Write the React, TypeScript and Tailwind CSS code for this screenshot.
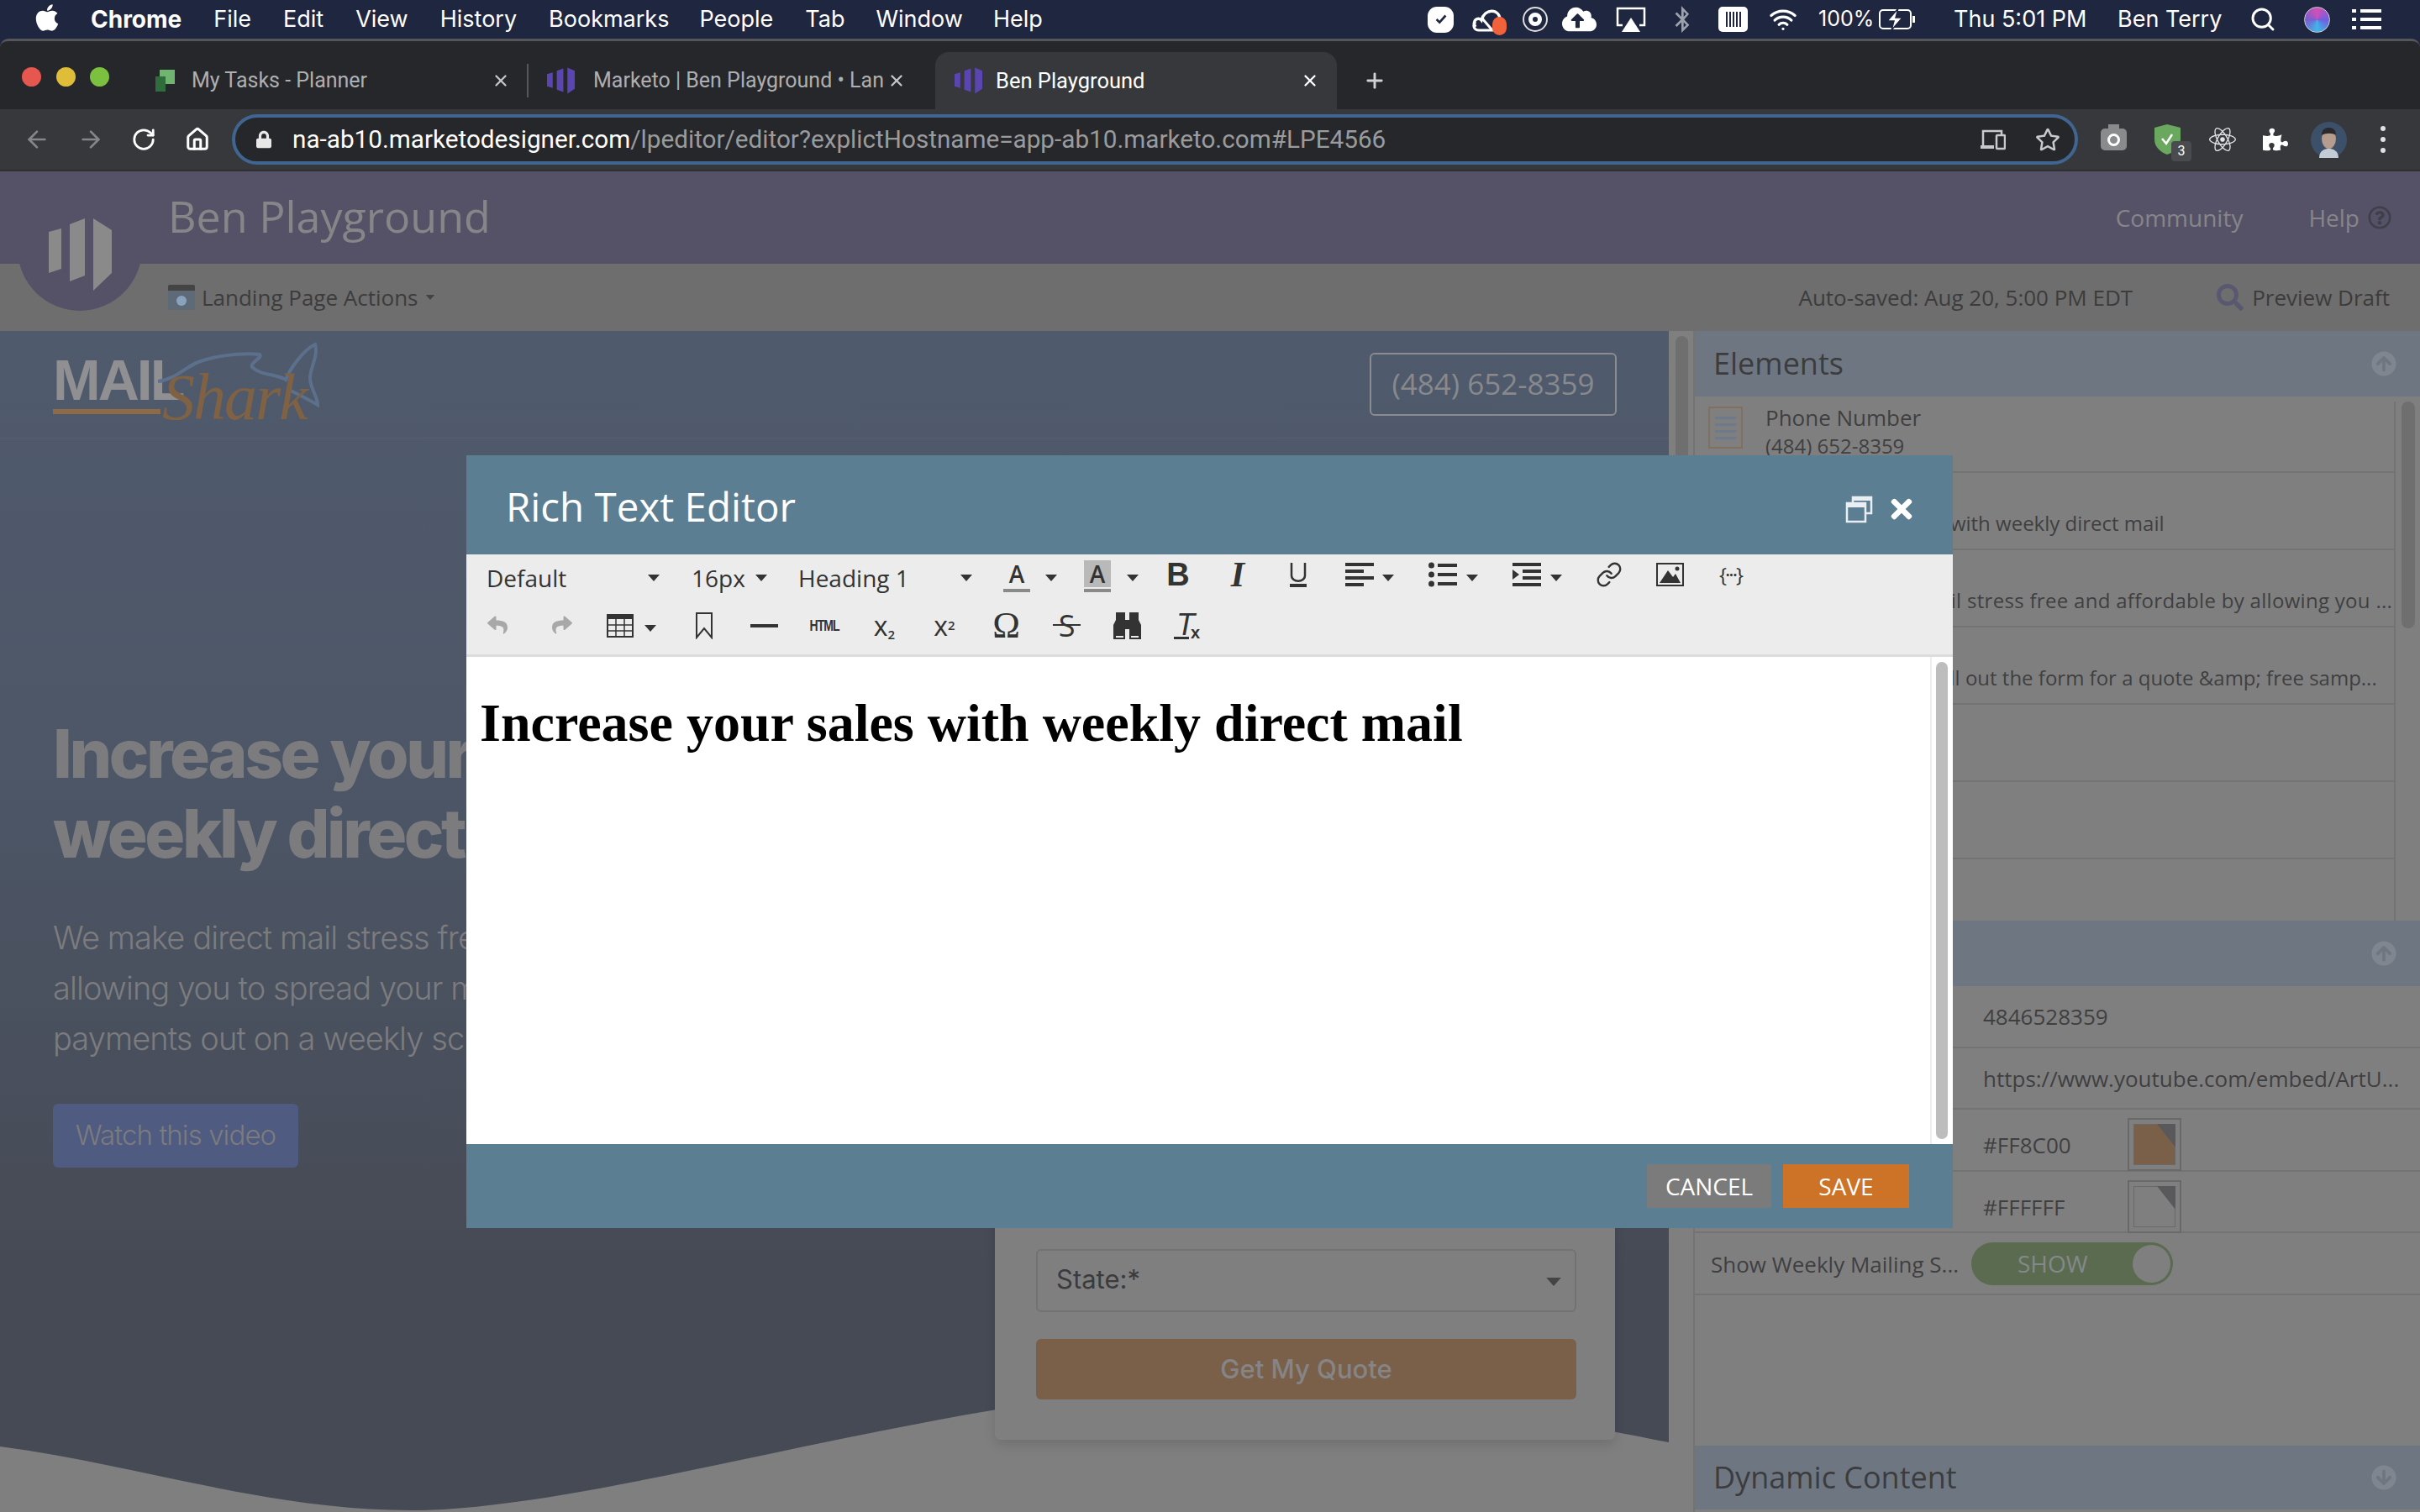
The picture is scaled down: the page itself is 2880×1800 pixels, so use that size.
import React from "react";
import {
  FaApple, FaBluetoothB, FaCloudUploadAlt, FaPuzzlePiece, FaReact, FaReply, FaShare,
  FaTimes, FaRegStar, FaArrowCircleUp, FaArrowCircleDown, FaRegQuestionCircle, FaLock, FaSearch,
} from "react-icons/fa";
import { ArrowLeft, ArrowRight, RotateCw, Home, Search, Wifi, Plus, X, Link } from "lucide-react";

const ui = "font-['Open_Sans',sans-serif]";
const sys = "font-['Inter','Liberation_Sans',sans-serif]";

function Caret({ className = "" }: { className?: string }) {
  return <span className={`shrink-0 w-0 h-0 border-l-[7px] border-r-[7px] border-t-[8px] border-l-transparent border-r-transparent border-t-[#333] ${className}`} />;
}

function Favicon({ className = "" }: { className?: string }) {
  return (
    <svg viewBox="0 0 34 32" className={className}>
      <polygon points="0,8 7,6 7,25 0,23" fill="#5b45b0" />
      <polygon points="12,4 20,1 20,30 12,27" fill="#5b45b0" />
      <polygon points="25,0 34,4 34,26 25,32" fill="#5b45b0" />
    </svg>
  );
}

function MenuBar() {
  const items: [string, string][] = [
    ["File", "ml-[38px]"], ["Edit", "ml-[38px]"], ["View", "ml-[38px]"], ["History", "ml-[38px]"], ["Bookmarks", "ml-[38px]"],
    ["People", "ml-[36px]"], ["Tab", "ml-[38px]"], ["Window", "ml-[37px]"], ["Help", "ml-[36px]"],
  ];
  return (
    <div className={`h-[46px] shrink-0 flex items-center bg-[#1f2640] text-white text-[27px] ${sys}`}>
      <FaApple className="ml-[41px] w-[30px] h-[36px] -mt-[5px]" />
      <span className="ml-[37px] font-bold text-[28px]">Chrome</span>
      {items.map(([t, m]) => <span key={t} className={m}>{t}</span>)}
      <div className="ml-auto flex items-center">
        <span className="w-[31px] h-[31px] rounded-[11px] bg-white flex items-center justify-center">
          <svg viewBox="0 0 20 20" className="w-[18px] h-[18px]"><path d="M4 10l4 4 8-9" stroke="#1f2640" strokeWidth="3" fill="none" /></svg>
        </span>
        <span className="ml-[22px] relative w-[41px] h-[31px]">
          <svg viewBox="0 0 41 31" className="w-[41px] h-[31px]"><path d="M4 24c-5-7 3-13 7-8 4-14 20-14 22-2" stroke="#fff" strokeWidth="3.5" fill="none" /><path d="M12 14l12 14H8c-6 0-8-6-4-10" stroke="#fff" strokeWidth="3" fill="none" /></svg>
          <span className="absolute right-0 bottom-[-3px] w-[17px] h-[22px] rounded-full bg-[#f0623a]" />
        </span>
        <span className="ml-[19px] w-[30px] h-[30px] rounded-full border-2 border-[#ddd] flex items-center justify-center">
          <span className="w-[16px] h-[16px] rounded-full border-[5px] border-white" />
        </span>
        <FaCloudUploadAlt className="ml-[17px] w-[41px] h-[36px]" />
        <svg viewBox="0 0 36 30" className="ml-[23px] w-[36px] h-[30px]"><path d="M8 22H2V2h32v20h-6" stroke="#fff" strokeWidth="2.5" fill="none" /><polygon points="18,13 29,30 7,30" fill="#fff" /></svg>
        <FaBluetoothB className="ml-[31px] w-[24px] h-[32px] text-[#9ea2ad]" />
        <span className="ml-[31px] w-[35px] h-[30px] rounded-[5px] bg-white flex items-center justify-center gap-[2px]">
          <i className="block w-[2px] h-[18px] bg-[#1f2640]" /><i className="block w-[2px] h-[18px] bg-[#1f2640]" /><i className="block w-[2px] h-[18px] bg-[#1f2640]" /><i className="block w-[2px] h-[18px] bg-[#1f2640]" /><i className="block w-[2px] h-[18px] bg-[#1f2640]" />
        </span>
        <Wifi className="ml-[22px] w-[40px] h-[34px]" strokeWidth={2.2} />
        <span className="ml-[22px] text-[25px] w-[63px] whitespace-nowrap">100%</span>
        <svg viewBox="0 0 44 26" className="ml-[9px] w-[44px] h-[26px]"><rect x="1" y="2" width="37" height="22" rx="4" stroke="#fff" strokeWidth="2" fill="none" /><rect x="40" y="9" width="3" height="8" fill="#fff" /><polygon points="23,0 10,15 18,15 15,26 28,11 20,11" fill="#fff" stroke="#1f2640" strokeWidth="1.5" /></svg>
        <span className="ml-[45px] w-[159px] whitespace-nowrap">Thu 5:01 PM</span>
        <span className="ml-[36px] w-[125px] whitespace-nowrap">Ben Terry</span>
        <Search className="ml-[32px] w-[32px] h-[32px]" strokeWidth={2.2} />
        <span className="ml-[33px] w-[31px] h-[31px] rounded-full bg-[conic-gradient(#d44fb5,#6f5fe0,#3fb6e8,#7a5fd0,#d44fb5)] border border-[#ccc]" />
        <svg viewBox="0 0 35 28" className="ml-[26px] mr-[46px] w-[35px] h-[28px]"><rect x="0" y="2" width="5" height="4" fill="#fff" /><rect x="10" y="2" width="25" height="4" fill="#fff" /><rect x="0" y="12" width="5" height="4" fill="#fff" /><rect x="10" y="12" width="25" height="4" fill="#fff" /><rect x="0" y="22" width="5" height="4" fill="#fff" /><rect x="10" y="22" width="25" height="4" fill="#fff" /></svg>
      </div>
    </div>
  );
}

function TabStrip() {
  return (
    <div className={`h-[84px] shrink-0 flex items-stretch bg-[#26272b] border-t-[3px] border-[#55565a] rounded-t-[10px] text-[25px] font-['Roboto',sans-serif]`}>
      <div className="w-[1113px] flex items-center pt-[13px]">
        <span className="ml-[26px] w-[23px] h-[23px] rounded-full bg-[#e6584f] -mt-[9px]" />
        <span className="ml-[18px] w-[23px] h-[23px] rounded-full bg-[#e0bd39] -mt-[9px]" />
        <span className="ml-[17px] w-[23px] h-[23px] rounded-full bg-[#7cc03f] -mt-[9px]" />
        <svg viewBox="0 0 23 26" className="ml-[55px] w-[23px] h-[26px] shrink-0"><rect x="5" width="18" height="17" fill="#6fb56f" /><rect x="0" y="8" width="12" height="18" fill="#2f6e3c" /></svg>
        <span className="ml-[20px] w-[359px] text-[#aeafb1] whitespace-nowrap">My Tasks - Planner</span>
        <X className="w-[22px] h-[22px] text-[#c5c6c8] -ml-[2px]" strokeWidth={2.5} />
        <span className="ml-[20px] w-[2px] h-[40px] bg-[#56575b]" />
        <Favicon className="ml-[22px] w-[33px] h-[32px] shrink-0" />
        <span className="ml-[22px] w-[347px] text-[#aeafb1] whitespace-nowrap overflow-hidden">Marketo | Ben Playground • Landing</span>
        <X className="ml-[3px] w-[22px] h-[22px] text-[#c5c6c8]" strokeWidth={2.5} />
      </div>
      <div className="mt-[13px] w-[478px] bg-[#37383c] rounded-t-[16px] flex items-center text-[25.5px]">
        <Favicon className="ml-[23px] w-[33px] h-[32px]" />
        <span className="ml-[16px] text-white">Ben Playground</span>
        <X className="ml-auto mr-[21px] w-[22px] h-[22px] text-white" strokeWidth={2.5} />
      </div>
      <div className="pt-[13px] flex items-center"><Plus className="ml-[31px] w-[28px] h-[28px] text-[#d0d1d3]" strokeWidth={2.5} /></div>
    </div>
  );
}

function Toolbar() {
  return (
    <div className="h-[74px] shrink-0 flex items-center bg-[#37383c] border-b-[2px] border-[#2e2f33]">
      <ArrowLeft className="ml-[28px] w-[32px] h-[32px] text-[#85868a]" strokeWidth={2} />
      <ArrowRight className="ml-[32px] w-[32px] h-[32px] text-[#85868a]" strokeWidth={2} />
      <RotateCw className="ml-[32px] w-[30px] h-[30px] text-white" strokeWidth={2.2} />
      <Home className="ml-[34px] w-[30px] h-[30px] text-white" strokeWidth={2.4} />
      <div className="ml-[26px] w-[2197px] h-[60px] flex items-center rounded-full border-[4px] border-[#3f6590] bg-[#26272b]">
        <FaLock className="ml-[25px] w-[18px] h-[22px] text-[#e8e8e8]" />
        <span className="ml-[25px] text-[29.7px] font-['Roboto',sans-serif] whitespace-nowrap text-[#9a9b9d]"><span className="text-white">na-ab10.marketodesigner.com</span>/lpeditor/editor?explictHostname=app-ab10.marketo.com#LPE4566</span>
        <svg viewBox="0 0 30 26" className="ml-auto w-[30px] h-[26px]"><path d="M3 21V3h22v5" stroke="#c8c9cb" strokeWidth="2.5" fill="none" /><rect x="0" y="20" width="16" height="4" fill="#c8c9cb" /><rect x="19" y="8" width="10" height="16" rx="1" stroke="#c8c9cb" strokeWidth="2.5" fill="none" /></svg>
        <FaRegStar className="ml-[35px] mr-[17px] w-[30px] h-[30px] text-[#c8c9cb]" />
      </div>
      <span className="ml-[27px] relative w-[31px] h-[26px] rounded-[5px] bg-[#8a8b8d] flex items-center justify-center">
        <span className="w-[15px] h-[15px] rounded-full border-[3px] border-white" />
        <span className="absolute -top-[5px] left-[9px] w-[13px] h-[6px] bg-[#8a8b8d]" />
      </span>
      <span className="ml-[33px] relative w-[31px] h-[34px] -mt-[2px]">
        <svg viewBox="0 0 31 36" className="w-[31px] h-[36px]"><path d="M15 0l16 4v14c0 9-7 15-16 18C7 33 0 27 0 18V4z" fill="#6aa85f" /><path d="M9 17l5 6 7-11" stroke="#fff" strokeWidth="2.5" fill="none" /></svg>
        <span className="absolute left-[20px] top-[20px] w-[24px] h-[24px] rounded-[4px] bg-[#4a4b4e] text-white text-[16px] flex items-center justify-center font-['Roboto',sans-serif]">3</span>
      </span>
      <FaReact className="ml-[34px] w-[32px] h-[32px] text-[#e2e3e5]" />
      <FaPuzzlePiece className="ml-[32px] w-[30px] h-[30px] text-white" />
      <svg viewBox="0 0 43 43" className="ml-[27px] w-[43px] h-[43px]">
        <circle cx="21.5" cy="21.5" r="21.5" fill="#3d5069" />
        <path d="M10 43c0-9 7-11 11.500-11S33 34 33 43z" fill="#c4cdd6" />
        <ellipse cx="21.500" cy="20" rx="8.500" ry="12" fill="#b59c8c" />
        <path d="M13 16c0-7 4-9 8.500-9S30 9 30 16c-4-3-12-3-17 0z" fill="#2a2a2e" />
      </svg>
      <span className="ml-[40px] flex flex-col gap-[7px]">
        <i className="block w-[6px] h-[6px] rounded-full bg-[#e0e1e3]" /><i className="block w-[6px] h-[6px] rounded-full bg-[#e0e1e3]" /><i className="block w-[6px] h-[6px] rounded-full bg-[#e0e1e3]" />
      </span>
    </div>
  );
}

function AppHeader() {
  return (
    <div className={`h-[110px] shrink-0 flex items-center bg-[#555268] text-[#868688] ${ui}`}>
      <span className="ml-[200px] -mt-[5px] text-[52px] leading-none">Ben Playground</span>
      <span className="ml-auto text-[28px]">Community</span>
      <span className="ml-[78px] text-[28px]">Help</span>
      <FaRegQuestionCircle className="ml-[10px] mr-[34px] w-[28px] h-[28px] text-[#3f3f4a]" />
    </div>
  );
}

function SubHeader() {
  return (
    <div className={`h-[80px] shrink-0 flex items-center bg-[#6e6e6e] text-[#3c3c3c] text-[26px] ${ui}`}>
      <span className="ml-[200px] w-[32px] h-[30px] rounded-[2px] bg-[#5f6a78] border-t-[7px] border-[#444] flex items-center justify-center">
        <span className="w-[12px] h-[12px] rounded-full bg-[#8aa3bd]" />
      </span>
      <span className="ml-[8px]">Landing Page Actions</span>
      <Caret className="ml-[7px] !border-t-[#444] scale-75" />
      <span className="ml-auto">Auto-saved: Aug 20, 5:00 PM EDT</span>
      <FaSearch className="ml-[100px] w-[32px] h-[32px] text-[#5a5870]" />
      <span className="ml-[10px] mr-[36px]">Preview Draft</span>
    </div>
  );
}

function LeftPane() {
  return (
    <div className="relative w-[1986px] shrink-0 h-full bg-[linear-gradient(180deg,#4f5a6c_0%,#4d5768_35%,#464a54_80%)]">
      <div className="h-[128px] border-b border-[#566071] flex items-start">
        <div className="relative ml-[63px] mt-[18px] w-[320px] h-[110px]">
          <span className={`absolute left-0 top-[6px] text-[#909092] font-['Liberation_Sans',sans-serif] font-bold text-[68px] leading-none tracking-[-3px]`}>MAIL</span>
          <span className="absolute left-0 top-[75px] w-[128px] h-[6px] bg-[#8f6a47]" />
          <svg viewBox="0 0 320 110" className="absolute -left-[4px] top-0 w-[320px] h-[110px] overflow-visible">
            <path d="M129 42c20-2 34-18 48-23 16-6 48-12 73-9 4 4-12 10-9 15 10 10 28 8 40 15 6-15 22-36 35-42 4 14-6 28-6 40 0 12 9 22 9 32-10-6-22-12-32-17" stroke="#5c708c" strokeWidth="4" fill="none" />
          </svg>
          <span className="absolute left-[130px] top-[22px] font-['Liberation_Serif',serif] italic text-[#7f6144] text-[78px] leading-none tracking-[-2px]">Shark</span>
        </div>
        <div className={`ml-auto mr-[62px] mt-[26px] w-[294px] h-[75px] rounded-[6px] border-2 border-[#8a8c90] flex items-center justify-center text-[#88898c] text-[35px] ${ui}`}>(484) 652-8359</div>
      </div>
      <div className="pl-[63px] pt-[327px] font-['Inter',sans-serif] text-[#7c7c7e] whitespace-nowrap">
        <div className="text-[80px] leading-[95px] font-extrabold tracking-[-3.4px]">Increase your sales with<br />weekly direct mail</div>
        <div className="mt-[47px] text-[38px] leading-[60px] font-light tracking-[-0.9px]">We make direct mail stress free and affordable by<br />allowing you to spread your mailing<br />payments out on a weekly schedule</div>
        <div className="mt-[48px] w-[292px] h-[76px] rounded-[6px] bg-[#4f5b80] flex items-center justify-center text-[33px] font-light tracking-[-0.9px]">Watch this video</div>
      </div>
      <svg viewBox="0 0 1986 178" className="absolute left-0 bottom-0 w-[1986px] h-[178px]">
        <path d="M0 100C170 123 320 176 490 176C720 176 1150 30 1450 30C1650 30 1850 68 1986 95V178H0Z" fill="#7f7f80" />
      </svg>
      <div className="absolute left-[1184px] top-[600px] w-[738px] h-[720px] rounded-[6px] bg-[#7f7f80] shadow-[0_6px_14px_rgba(0,0,0,0.12)] flex flex-col justify-end pl-[49px] pr-[46px] pb-[48px] font-['Inter',sans-serif]">
        <div className="h-[75px] rounded-[6px] border-2 border-[#727273] flex items-center justify-between pl-[22px] pr-[18px] text-[31px] text-[#3b3b3c]">
          <span className="-mt-[2px]">State:*</span><Caret className="!border-t-[#444] mt-[3px] scale-125" />
        </div>
        <div className="mt-[32px] h-[72px] rounded-[6px] bg-[#7a6049] flex items-center justify-center text-[31px] font-medium text-[#858587]">Get My Quote</div>
      </div>
    </div>
  );
}

function PanelHeader({ title, down = false, h }: { title: string; down?: boolean; h: string }) {
  const I = down ? FaArrowCircleDown : FaArrowCircleUp;
  return (
    <div className={`${h} shrink-0 bg-[#6e7781] flex items-center pl-[22px] pr-[28px] text-[36px] text-[#3c3c3e]`}>
      <span>{title}</span>
      <I className="ml-auto w-[30px] h-[30px] text-[#7f8690]" />
    </div>
  );
}

function ElementRow({ title, value, valueClass = "" }: { title: string; value: string; valueClass?: string }) {
  return (
    <div className="h-[92px] border-b-2 border-[#737374] pl-[84px] pt-[9px] text-[#3f3f40] whitespace-nowrap">
      <div className="text-[26px] leading-[34px]">{title}</div>
      <div className={`text-[24px] leading-[34px] ${valueClass}`}>{value}</div>
    </div>
  );
}

function Swatch({ fill }: { fill: string }) {
  return (
    <span className="relative w-[64px] h-[63px] border-2 border-[#69696a] p-[5px]">
      <span className={`block w-full h-full border border-[#69696a] ${fill}`} />
      <svg viewBox="0 0 22 28" className="absolute right-[5px] top-[5px] w-[22px] h-[28px]"><polygon points="0,0 22,0 22,28" fill="#59595c" /></svg>
    </span>
  );
}

function RightPane() {
  return (
    <div className={`flex-1 min-w-0 h-full flex flex-col bg-[#7f7f80] ${ui}`}>
      <PanelHeader title="Elements" h="h-[78px]" />
      <div className="relative h-[624px] shrink-0 pr-[29px] pt-[6px]">
        <div className="border-r-2 border-[#737374] h-full">
          <div className="h-[85px] flex border-b-2 border-[#737374] pl-[16px] text-[#3f3f40] leading-[34px]">
            <span className="mt-[6px] w-[41px] h-[50px] border-2 border-[#80705f] flex flex-col gap-[5px] justify-center px-[6px]">
              <i className="block h-[3px] bg-[#6c7a8c]" /><i className="block h-[3px] bg-[#6c7a8c]" /><i className="block h-[3px] bg-[#6c7a8c]" /><i className="block h-[3px] bg-[#6c7a8c]" />
            </span>
            <div className="ml-[27px] pt-[2px] whitespace-nowrap"><div className="text-[26px]">Phone Number</div><div className="text-[24px]">(484) 652-8359</div></div>
          </div>
          <ElementRow title="Headline" value="Increase your sales with weekly direct mail" />
          <ElementRow title="Subheadline" value="We make direct mail stress free and affordable by allowing you ..." valueClass="tracking-[0.3px]" />
          <ElementRow title="Form Headline" value="Ready to start? Fill out the form for a quote &amp;amp; free samp..." valueClass="ml-[29px]" />
          <div className="h-[92px] border-b-2 border-[#737374]" />
          <div className="h-[92px] border-b-2 border-[#737374]" />
        </div>
        <span className="absolute right-[6px] top-[6px] w-[16px] h-[270px] rounded-full bg-[#6f6f70]" />
      </div>
      <PanelHeader title="Variables" h="h-[78px]" />
      <div className="flex-1 text-[26px] text-[#3f3f40]">
        {["4846528359", "https://www.youtube.com/embed/ArtU..."].map((v) => (
          <div key={v} className="h-[73.5px] flex items-center border-b-2 border-[#737374] pl-[343px] pt-[2px] whitespace-nowrap">{v}</div>
        ))}
        <div className="h-[74px] flex items-center border-b-2 border-[#737374] pl-[343px] pt-[10px]"><span className="w-[172px] pt-[2px]">#FF8C00</span><Swatch fill="bg-[#7a6049]" /></div>
        <div className="h-[73px] flex items-center border-b-2 border-[#737374] pl-[343px] pt-[12px]"><span className="w-[172px] pt-[2px]">#FFFFFF</span><Swatch fill="bg-[#7f7f80]" /></div>
        <div className="h-[74px] flex items-center border-b-2 border-[#737374] pl-[19px]">
          <span className="w-[310px] whitespace-nowrap pt-[2px]">Show Weekly Mailing S...</span>
          <span className="w-[240px] h-[51px] rounded-full bg-[#5b6b4f] flex items-center relative text-[#84888a] text-[28px] pl-[55px]">SHOW<span className="absolute right-[3px] top-[3px] w-[45px] h-[45px] rounded-full bg-[#7f7f80]" /></span>
        </div>
      </div>
      <PanelHeader title="Dynamic Content" down h="h-[76px]" />
      <div className="h-[3px] shrink-0" />
    </div>
  );
}

function TB({ ml, children, className = "" }: { ml: string; children: React.ReactNode; className?: string }) {
  return <span className={`${ml} shrink-0 flex items-center justify-center text-[#333] ${className}`}>{children}</span>;
}

function Bars({ kind }: { kind: "align" | "list" | "indent" }) {
  const r = (x: number, y: number, w: number) => <rect key={`${x}${y}`} x={x} y={y} width={w} height="4" fill="#333" />;
  return (
    <svg viewBox="0 0 34 30" className="w-[34px] h-[30px]">
      {kind === "align" && [r(0, 1, 34), r(0, 9, 22), r(0, 17, 34), r(0, 25, 22)]}
      {kind === "list" && [<circle key="a" cx="3.5" cy="4" r="3.5" fill="#333" />, <circle key="b" cx="3.5" cy="15" r="3.5" fill="#333" />, <circle key="c" cx="3.5" cy="26" r="3.5" fill="#333" />, r(11, 2, 23), r(11, 13, 23), r(11, 24, 23)]}
      {kind === "indent" && [r(0, 1, 34), r(12, 9, 22), r(12, 17, 22), r(0, 25, 34), <polygon key="t" points="0,9 8,15 0,21" fill="#333" />]}
    </svg>
  );
}

function ColorA({ bg }: { bg?: boolean }) {
  return (
    <span className="w-[32px] flex flex-col items-center">
      <span className={`w-[32px] h-[32px] flex items-center justify-center text-[28px] font-semibold leading-none ${bg ? "bg-[#b9b9b9]" : ""}`}>A</span>
      <span className="mt-[2px] w-[32px] h-[4px] bg-[#8a8a8a]" />
    </span>
  );
}

function Modal() {
  return (
    <div className={`absolute left-[555px] top-[542px] w-[1769px] h-[920px] flex flex-col bg-[#5c7e92] ${ui}`}>
      <div className="h-[118px] shrink-0 flex items-center pl-[47px] text-white text-[47.5px]">
        <span className="mt-[3px]">Rich Text Editor</span>
        <svg viewBox="0 0 33 33" className="ml-auto mt-[10px] w-[33px] h-[33px]"><path d="M9 8V2h22v19h-7" stroke="#e8eef2" strokeWidth="2.5" fill="none" /><rect x="9" y="1" width="22" height="5" fill="#e8eef2" /><rect x="2" y="9" width="22" height="22" stroke="#e8eef2" strokeWidth="2.5" fill="none" /><rect x="2" y="9" width="22" height="5" fill="#e8eef2" /></svg>
        <FaTimes className="ml-[18px] mr-[45px] mt-[10px] w-[32px] h-[36px] text-white" />
      </div>
      <div className="h-[122px] shrink-0 bg-[#ececec] border-b-[3px] border-[#dcdcdc] flex flex-col">
        <div className="h-[56px] flex items-center text-[28px] text-[#333] whitespace-nowrap">
          <span className="ml-[24px] w-[192px] shrink-0">Default</span>
          <Caret />
          <span className="ml-[38px] w-[76px] shrink-0">16px</span>
          <Caret />
          <span className="ml-[37px] w-[193px] shrink-0">Heading 1</span>
          <Caret />
          <TB ml="ml-[37px]" className="-mt-[4px]"><ColorA /></TB>
          <Caret className="ml-[18px]" />
          <TB ml="ml-[32px]" className="-mt-[4px]"><ColorA bg /></TB>
          <Caret className="ml-[19px]" />
          <TB ml="ml-[35px]" className="-mt-[8px] w-[24px]"><span className="font-['Liberation_Sans',sans-serif] font-bold text-[38px] leading-none">B</span></TB>
          <TB ml="ml-[47px]" className="-mt-[8px] w-[24px]"><span className="font-['Liberation_Serif',serif] italic font-bold text-[42px] leading-none">I</span></TB>
          <TB ml="ml-[50px]" className="-mt-[8px] w-[20px]">
            <svg viewBox="0 0 20 30" className="w-[20px] h-[30px]"><path d="M2 1v15c0 9 16 9 16 0V1" stroke="#333" strokeWidth="2.5" fill="none" /><rect y="26" width="20" height="4" fill="#333" /></svg>
          </TB>
          <TB ml="ml-[46px]" className="-mt-[8px]"><Bars kind="align" /></TB>
          <Caret className="ml-[10px]" />
          <TB ml="ml-[41px]" className="-mt-[8px]"><Bars kind="list" /></TB>
          <Caret className="ml-[11px]" />
          <TB ml="ml-[41px]" className="-mt-[8px]"><Bars kind="indent" /></TB>
          <Caret className="ml-[11px]" />
          <TB ml="ml-[40px]" className="-mt-[8px]"><Link className="w-[32px] h-[32px] text-[#333]" strokeWidth={1.8} /></TB>
          <TB ml="ml-[40px]" className="-mt-[8px]">
            <svg viewBox="0 0 33 28" className="w-[33px] h-[28px]"><rect x="1" y="1" width="31" height="26" stroke="#333" strokeWidth="2" fill="none" /><polygon points="4,24 14,9 20,17 23,13 29,24" fill="#333" /><circle cx="25" cy="7" r="2.500" fill="#333" /></svg>
          </TB>
          <TB ml="ml-[40px]" className="-mt-[8px] w-[31px] text-[24px] leading-none tracking-[-2px]">{"{···}"}</TB>
        </div>
        <div className="h-[60px] flex items-center whitespace-nowrap -mt-[1px]">
          <FaReply className="ml-[24px] w-[26px] h-[24px] text-[#a8a8a8] -mt-[2px] shrink-0" />
          <FaShare className="ml-[51px] w-[26px] h-[24px] text-[#a8a8a8] -mt-[2px] shrink-0" />
          <TB ml="ml-[40px]">
            <svg viewBox="0 0 32 28" className="w-[32px] h-[28px]"><rect x="1" y="1" width="30" height="26" stroke="#333" strokeWidth="2" fill="none" /><rect x="1" y="1" width="30" height="5" fill="#333" /><path d="M11 6v21M21 6v21M1 13h30M1 20h30" stroke="#333" strokeWidth="1.5" /></svg>
          </TB>
          <Caret className="ml-[13px] mt-[6px]" />
          <svg viewBox="0 0 20 32" className="ml-[47px] w-[20px] h-[32px] shrink-0"><path d="M1 1h18v29l-9-11-9 11z" stroke="#333" strokeWidth="2" fill="none" /></svg>
          <span className="ml-[45px] w-[33px] h-[4px] bg-[#333] shrink-0" />
          <TB ml="ml-[38px]" className="w-[34px] text-[14px] font-bold font-['Liberation_Sans',sans-serif] tracking-[-1px] scale-y-125">HTML</TB>
          <TB ml="ml-[40px]" className="w-[29px] text-[32px] leading-none"><span>x<sub className="text-[15px] font-semibold">2</sub></span></TB>
          <TB ml="ml-[43px]" className="w-[28px] text-[32px] leading-none"><span>x<sup className="text-[15px] font-semibold">2</sup></span></TB>
          <TB ml="ml-[42px]" className="w-[35px] text-[44px] leading-none font-['Liberation_Serif',serif]">Ω</TB>
          <TB ml="ml-[38px]" className="w-[33px] text-[36px] leading-none relative"><span>S</span><span className="absolute left-0 top-[16px] w-[33px] h-[2px] bg-[#333]" /></TB>
          <svg viewBox="0 0 33 32" className="ml-[39px] w-[33px] h-[32px] shrink-0">
            <path d="M3 0h11v9h5V0h11v9l3 6v17H19V20h-5v12H0V15l3-6z" fill="#333" />
            <rect x="3" y="28" width="9" height="2" fill="#ececec" /><rect x="21" y="28" width="9" height="2" fill="#ececec" />
          </svg>
          <TB ml="ml-[39px]" className="w-[31px] relative h-[32px] font-['Liberation_Sans',sans-serif] italic text-[36px] leading-none">
            <span className="absolute left-[3px] -top-[3px]">T</span><span className="absolute left-0 bottom-0 w-[18px] h-[3px] bg-[#333]" /><span className="absolute right-0 -bottom-[2px] text-[20px] not-italic font-bold">x</span>
          </TB>
        </div>
      </div>
      <div className="flex-1 min-h-0 bg-white flex">
        <div className="flex-1 pl-[16px] pt-[39px] font-['Liberation_Serif',serif] font-bold text-[64px] leading-[80px] text-black whitespace-nowrap">Increase your sales with weekly direct mail</div>
        <div className="w-[27px] border-l-2 border-[#eee] pl-[5px] pr-[6px] py-[6px]"><span className="block h-full rounded-full bg-[#bdbdbd]" /></div>
      </div>
      <div className="h-[100px] shrink-0 flex items-center justify-end pr-[52px] text-white text-[28px]">
        <span className="w-[148px] h-[52px] bg-[#7b7b7b] flex items-center justify-center">CANCEL</span>
        <span className="ml-[14px] w-[150px] h-[52px] bg-[#cd7327] flex items-center justify-center">SAVE</span>
      </div>
    </div>
  );
}

export default function App() {
  return (
    <div className="relative w-[2880px] h-[1800px] overflow-hidden flex flex-col bg-[#1f2640]">
      <MenuBar />
      <TabStrip />
      <Toolbar />
      <AppHeader />
      <SubHeader />
      <div className="flex-1 min-h-0 flex bg-[#7f7f80]">
        <LeftPane />
        <div className="w-[31px] shrink-0 h-full border-r-2 border-[#737374] pl-[8px] pr-[6px] pt-[6px]">
          <span className="block w-[15px] h-[400px] rounded-full bg-[#6f6f70]" />
        </div>
        <RightPane />
      </div>
      <div className="absolute left-[21px] top-[222px] w-[148px] h-[148px] rounded-full bg-[#555268] flex items-center justify-center">
        <svg viewBox="0 0 75 86" className="w-[75px] h-[86px] mt-[14px]">
          <polygon points="0,16 15,12 15,60 0,65" fill="#8a8a8a" />
          <polygon points="25,7 43,0 43,68 25,75" fill="#8a8a8a" />
          <polygon points="53,0 75,14 75,65 53,86" fill="#8a8a8a" />
        </svg>
      </div>
      <Modal />
    </div>
  );
}
